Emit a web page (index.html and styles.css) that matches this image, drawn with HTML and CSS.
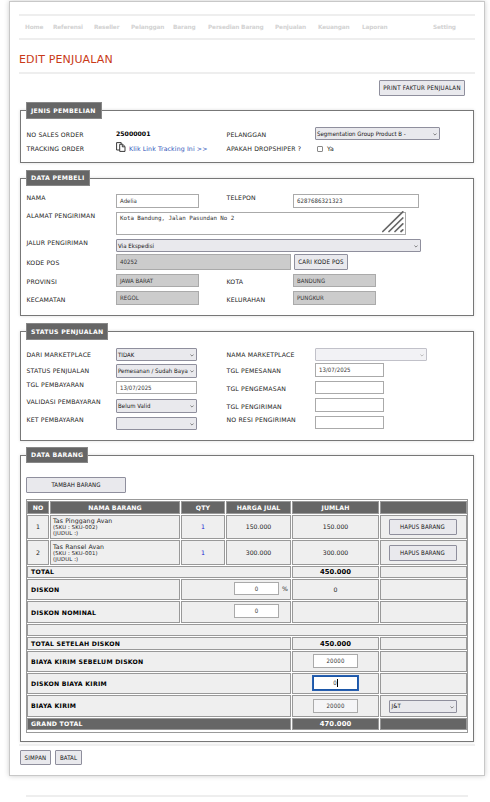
FILE: index.html
```html
<!DOCTYPE html>
<html lang="id">
<head>
<meta charset="utf-8">
<title>Edit Penjualan</title>
<link rel="stylesheet" href="styles.css">
</head>
<body>
<svg class="defs" width="0" height="0"><defs><symbol id="chev" viewBox="0 0 4 3"><path d="M.4.5 2 2.1 3.6.5" fill="none" stroke="#777" stroke-width=".9"/></symbol></defs></svg>
<main class="page">
  <nav class="menu"><span>Home</span><span>Referensi</span><span>Reseller</span><span>Pelanggan</span><span>Barang</span><span>Persedian Barang</span><span>Penjualan</span><span>Keuangan</span><span>Laporan</span><span>Setting</span></nav>
  <h1>EDIT PENJUALAN</h1>
  <div class="tools"><span class="btn print">PRINT FAKTUR PENJUALAN</span></div>

  <section class="box jenis">
    <h2 class="w76">JENIS PEMBELIAN</h2>
    <div class="row r1"><label class="m4">NO SALES ORDER</label><b class="order">25000001</b><label class="m4">PELANGGAN</label><span class="select w125 push">Segmentation Group Product B -<svg><use href="#chev"/></svg></span></div>
    <div class="row r2"><label class="m3">TRACKING ORDER</label>
      <span class="track"><svg class="copy" viewBox="0 0 10 11"><path d="M3.500 8H.6V.6h4.600V2M3.700 2.300h3l2.300 2.200v4.900H3.700zM6.300 2.500v2.300h2.400" fill="#fff" stroke="#222" stroke-width=".9"/></svg><a>Klik Link Tracking Ini &gt;&gt;</a></span>
      <label class="m3">APAKAH DROPSHIPER ?</label><span class="check push"><i></i>Ya</span></div>
  </section>

  <section class="box pembeli">
    <h2 class="w64">DATA PEMBELI</h2>
    <div class="row h18"><label>NAMA</label><span class="input w83">Adelia</span><label>TELEPON</label><span class="input w126 phone">6287686321323</span></div>
    <div class="row h27"><label>ALAMAT PENGIRIMAN</label><span class="area">Kota Bandung, Jalan Pasundan No 2<svg class="grip" viewBox="0 0 22 22"><path d="M.8 20.500 20.800.8M7 20.500 20.800 7M13 20.500l7.800-7.600M19 20.500l1.800-1.600" stroke="#666" stroke-width="1.700" stroke-linecap="round"/></svg></span></div>
    <div class="row h15"><label>JALUR PENGIRIMAN</label><span class="select w305">Via Ekspedisi<svg><use href="#chev"/></svg></span></div>
    <div class="row h20"><label class="m5">KODE POS</label><span class="input off w175 h16">40252</span><span class="btn cari">CARI KODE POS</span></div>
    <div class="row h17"><label class="m4">PROVINSI</label><span class="input off w83 h13">JAWA BARAT</span><label class="m4">KOTA</label><span class="input off w83 h13">BANDUNG</span></div>
    <div class="row h14"><label class="m5">KECAMATAN</label><span class="input off w83">REGOL</span><label class="m5">KELURAHAN</label><span class="input off w83">PUNGKUR</span></div>
  </section>

  <section class="box status">
    <h2 class="w82">STATUS PENJUALAN</h2>
    <div class="row h15"><label class="m3">DARI MARKETPLACE</label><span class="select w81">TIDAK<svg><use href="#chev"/></svg></span><label class="m3">NAMA MARKETPLACE</label><span class="select dim w112 push"><svg><use href="#chev"/></svg></span></div>
    <div class="row h18"><label class="m4">STATUS PENJUALAN</label><span class="select w81 down1 h14c">Pemesanan / Sudah Baya<svg><use href="#chev"/></svg></span><label class="m4">TGL PEMESANAN</label><span class="input w69 push">13/07/2025</span></div>
    <div class="row h17"><label>TGL PEMBAYARAN</label><span class="input w81 h13">13/07/2025</span><label class="m4">TGL PENGEMASAN</label><span class="input w69 h13 push"></span></div>
    <div class="row h18"><label>VALIDASI PEMBAYARAN</label><span class="select w81 down1 h14c">Belum Valid<svg><use href="#chev"/></svg></span><label class="m5">TGL PENGIRIMAN</label><span class="input w69 push"></span></div>
    <div class="row h15"><label>KET PEMBAYARAN</label><span class="select w81 down1"><svg><use href="#chev"/></svg></span><label>NO RESI PENGIRIMAN</label><span class="input w69 h13 push"></span></div>
  </section>

  <section class="box barang">
    <h2 class="w62">DATA BARANG</h2>
    <span class="btn tambah">TAMBAH BARANG</span>
    <div class="table">
      <div class="head">NO</div><div class="head">NAMA BARANG</div><div class="head">QTY</div><div class="head">HARGA JUAL</div><div class="head">JUMLAH</div><div class="head"></div>
      <div>1</div><div class="name"><span>Tas Pinggang Avan</span><small>(SKU : SKU-002)</small><small>(JUDUL :)</small></div><div class="qty">1</div><div>150.000</div><div>150.000</div><div><span class="btn hapus">HAPUS BARANG</span></div>
      <div>2</div><div class="name"><span>Tas Ransel Avan</span><small>(SKU : SKU-001)</small><small>(JUDUL :)</small></div><div class="qty">1</div><div>300.000</div><div>300.000</div><div><span class="btn hapus">HAPUS BARANG</span></div>
      <div class="sum s4">TOTAL</div><div class="val">450.000</div><div></div>
      <div class="sum s2">DISKON</div><div class="s2 disc"><span class="input num w45 h13">0</span>%</div><div>0</div><div></div>
      <div class="sum s2 low">DISKON NOMINAL</div><div class="s2 disc nominal"><span class="input num w45">0</span></div><div></div><div></div>
      <div class="s6"></div>
      <div class="sum s4">TOTAL SETELAH DISKON</div><div class="val">450.000</div><div></div>
      <div class="sum s4">BIAYA KIRIM SEBELUM DISKON</div><div class="top"><span class="input num w45">20000</span></div><div></div>
      <div class="sum s4">DISKON BIAYA KIRIM</div><div class="top"><span class="input num w45 focus">0<i></i></span></div><div></div>
      <div class="sum s4">BIAYA KIRIM</div><div class="top"><span class="input num w45 pale">20000</span></div><div><span class="select w68 courier">J&amp;T<svg><use href="#chev"/></svg></span></div>
      <div class="head sum s4">GRAND TOTAL</div><div class="head val">470.000</div><div class="head"></div>
    </div>
  </section>
  <div class="actions"><span class="btn simpan">SIMPAN</span><span class="btn batal">BATAL</span></div>
</main>
<footer></footer>
</body>
</html>
```
FILE: styles.css
```css
* { box-sizing: border-box; }
body { margin: 0; padding: 1px 5px 0 9px; background: #fff; height: 802px; overflow: hidden; font: 6.2px/8px "DejaVu Sans", sans-serif; color: #222; }
.defs { position: absolute; }
.page { height: 775px; border: 1px solid #c8c8c8; box-shadow: 0 0 5px #ccc; padding: 12px 9px 0 9px; background: #fff; }
.menu { height: 26px; border-top: 2px solid #eee; border-bottom: 2px solid #eee; display: grid; grid-template-columns: 28px 41px 37px 42px 35px 67px 43px 44px 71px 40px; padding-left: 6px; align-items: center; color: #d2d2d2; font-size: 5.8px; font-weight: bold; letter-spacing: -.15px; white-space: nowrap; }
h1 { margin: 0; height: 34px; border-bottom: 2px solid #eee; font: 11px/39px "DejaVu Sans", sans-serif; color: #c93a18; letter-spacing: .16px; }
.tools { display: flex; justify-content: flex-end; padding: 6px 10px 0 0; height: 36px; }
.btn { display: flex; align-items: center; justify-content: center; flex: none; background: #e9e9ed; border: 1px solid #8f8f9d; border-radius: 1px; color: #111; white-space: nowrap; height: 16px; font: 6.1px/8px "DejaVu Sans Condensed", "DejaVu Sans", sans-serif; letter-spacing: .1px; }
.print { width: 86px; letter-spacing: .27px; }
.box { margin-left: 1px; width: 454px; border: 1px solid #777; box-shadow: 0 0 3px #ddd; padding-left: 5px; position: relative; }
h2 { margin: -9px 0 0; height: 17px; background: #666; border: 1px solid #888; color: #fff; font: bold 6.2px/15px "DejaVu Sans", sans-serif; letter-spacing: .27px; padding-left: 4px; white-space: nowrap; }
.w76 { width: 76px; } .w64 { width: 64px; } .w82 { width: 82px; } .w62 { width: 62px; }
.jenis { height: 53px; margin-bottom: 15px; }
.pembeli { height: 138px; margin-bottom: 15px; }
.status { height: 110px; margin-bottom: 14px; }
.barang { height: 287px; }
.row { display: grid; grid-template-columns: 90px 110px 67px 1fr; align-items: start; }
.pembeli h2, .jenis h2, .status h2 { margin-bottom: 8px; }
.pembeli h2 { height: 16px; }
.pembeli h2, .barang h2 { line-height: 14px; }
.barang h2 { height: 16px; margin-bottom: 14px; }
.r1 { height: 15px; } .r2 { height: 14px; }
.h15 { height: 15px; } .h18 { height: 18px; } .h27 { height: 27px; } .h20 { height: 20px; } .h17 { height: 17px; } .h14 { height: 14px; }
label { white-space: nowrap; padding-left: .5px; letter-spacing: .15px; }
.m3 { padding-top: 3px; } .m4 { padding-top: 4px; } .m5 { padding-top: 5px; }
.push { margin-left: 22px; }
.order { color: #000; padding-top: 3px; }
.track { display: flex; align-items: center; color: #2a52b8; white-space: nowrap; letter-spacing: .13px; }
.track a { padding-top: 2px; }
.copy { width: 10px; height: 11px; margin-right: 3px; }
.check { display: flex; align-items: center; padding: 3px 0 0 2px; }
.check i { width: 6px; height: 6px; border: 1px solid #888; border-radius: 1px; margin-right: 4px; background: #fff; }
.input, .select { display: flex; align-items: center; flex: none; white-space: nowrap; position: relative; font: 6px/8px "DejaVu Sans Condensed", "DejaVu Sans", sans-serif; letter-spacing: .05px; color: #333; }
.input { height: 14px; border: 1px solid #aaa; background: #fff; padding-left: 3px; }
.phone { letter-spacing: .06px; }
.input.off { background: #ccc; border-color: #aaa; }
.select { height: 13px; border: 1px solid #8f8f9d; border-radius: 1px; background: #e9e9ed; padding: 0 9px 0 1px; color: #111; }
.select svg { position: absolute; right: 2px; top: 5px; width: 4px; height: 3px; }
.select.dim { opacity: .55; }
.h13.input { height: 13px; } .h16.input { height: 16px; } .h14c.select { height: 14px; }
.down1 { margin-top: 1px; }
.w125 { width: 125px; } .w83 { width: 83px; } .w126 { width: 126px; } .w305 { width: 305px; } .w175 { width: 175px; } .w81 { width: 81px; } .w112 { width: 112px; } .w69 { width: 69px; } .w45 { width: 45px; } .w68 { width: 68px; }
.area { width: 290px; height: 23px; border: 1px solid #aaa; padding: 1px 3px; position: relative; font: 5.8px/8px "DejaVu Sans Mono", monospace; letter-spacing: -.03px; white-space: nowrap; color: #333; }
.grip { position: absolute; right: 1px; bottom: 1px; width: 22px; height: 22px; }
.cari { width: 54px; margin-left: 68px; letter-spacing: .2px; }
.tambah { width: 100px; }
.table { margin-top: 6px; width: 442px; height: 234px; border: 1px solid #999; padding-top: 1px; display: grid; gap: 1px; grid-template-columns: 22px 130px 44px 65px 87px 87px; grid-template-rows: 13px 24px 25px 12px 21px 22px 12px 13px 21px 21px 22px 12px; }
.table > div { border: 1px solid #999; background: #efefef; display: flex; align-items: center; justify-content: center; min-width: 0; min-height: 0; white-space: nowrap; }
.table > .head { background: #666; color: #fff; font-weight: bold; letter-spacing: .1px; }
.table > .name { flex-direction: column; align-items: flex-start; padding: 0 0 1px 2px; line-height: 7px; letter-spacing: .1px; }
.name small { font-size: 5.3px; line-height: 6px; letter-spacing: .15px; }
.table > .qty { color: #2222d0; }
.table > .sum { justify-content: flex-start; padding-left: 3px; font-weight: bold; letter-spacing: .25px; }
.sum:not(.head), .val:not(.head) { color: #000; }
.table > .val { font-weight: bold; font-size: 6.8px; }
.s2 { grid-column: span 2; } .s4 { grid-column: span 4; } .s6 { grid-column: span 6; }
.table > .disc { justify-content: flex-end; padding-right: 2px; gap: 3px; padding-bottom: 2px; }
.table > .nominal { padding-right: 11px; }
.table > .low { padding-top: 2px; }
.table > .top { padding-bottom: 1px; }
.input.num { justify-content: center; padding: 0; letter-spacing: .2px; }
.input.pale { background: #f5f5f7; }
.focus { border-color: #1c57a8; box-shadow: 0 0 0 1px #2860b0; }
.focus i { width: 1px; height: 8px; background: #000; }
.hapus { width: 68px; height: 16px; }
.table .hapus, .courier { margin-right: 2px; }
.courier { padding-left: 2px; }
.actions { border-top: 2px solid #f0f0f0; margin-top: 2px; padding: 4px 0 0 1px; display: flex; gap: 4px; }
.simpan { width: 31px; height: 15px; letter-spacing: .2px; } .batal { width: 27px; height: 15px; }
footer { height: 2px; background: #eee; margin: 19px 17px 0; }
```
